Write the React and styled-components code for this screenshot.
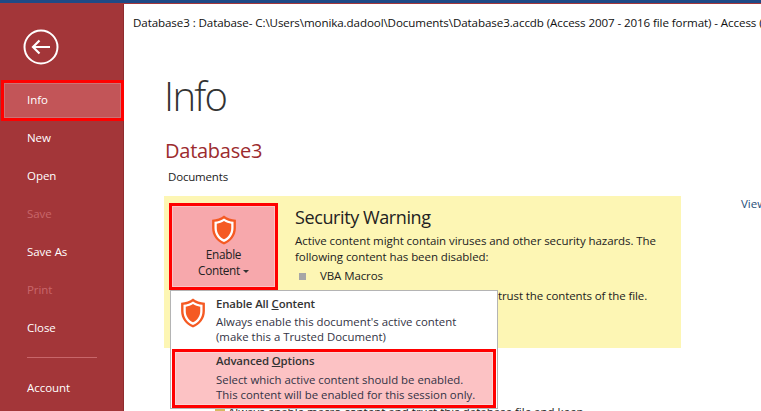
import React from "react";
import styled, { createGlobalStyle } from "styled-components";

const Global = createGlobalStyle`
  html, body { margin: 0; padding: 0; background: #fff; overflow: hidden; }
  body { font-family: "Open Sans", "Noto Sans", "Liberation Sans", sans-serif; }
  #root { width: 761px; height: 411px; overflow: hidden; }
`;
const Page = styled.div`width: 761px; height: 411px; display: flex; flex-direction: column; overflow: hidden;`;
const TopBar = styled.div`height: 3px; flex: none; background: #1f4a86; border-bottom: 1px solid #a4373a;`;
const Body = styled.div`flex: 1; display: flex; min-height: 0;`;
const Sidebar = styled.nav`
  width: 124px; flex: none; background: #a33639; border-right: 1px solid #8f2b2e; box-sizing: border-box;
  display: flex; flex-direction: column; color: #fff;
`;
const BackWrap = styled.div`height: 76px; flex: none; padding: 25px 0 0 23px; box-sizing: border-box; svg { display: block; }`;
const NavItem = styled.div`
  height: 38px; flex: none; box-sizing: border-box; display: flex; align-items: center; padding-left: 27px;
  font-size: 11.5px; letter-spacing: -0.05px;
  color: ${p => (p.$off ? "#c8666a" : "#fff")};
`;
const ActiveItem = styled(NavItem)`
  height: 41px; margin: 0 0 -3px 1px; width: 123px; padding: 0 0 3px 23px;
  border: 3px solid #f00; background: #c25558; box-shadow: inset 0 0 0 1px #cd7174;
`;
const Divider = styled.div`height: 1px; flex: none; margin: 11px 26px 10px 27px; background: #c8666a;`;
const Main = styled.main`flex: 1; position: relative; min-width: 0; overflow: hidden; padding: 11px 0 0 9px;`;
const FileTitle = styled.div`font-size: 11.6px; line-height: 16px; color: #111; white-space: nowrap; letter-spacing: -0.1px;`;
const Heading = styled.h1`margin: 38px 0 0 31px; font-size: 40px; line-height: 54px; font-weight: 300; color: #333; letter-spacing: -1.7px;`;
const DbName = styled.h2`margin: 14px 0 0 32px; font-size: 20px; line-height: 28px; font-weight: 400; color: #9c2b2e; letter-spacing: -0.25px;`;
const Docs = styled.div`margin: 4px 0 0 35px; font-size: 11.5px; line-height: 16px; color: #222; letter-spacing: -0.18px;`;
const Row = styled.div`display: flex; align-items: flex-start; margin: 11px 0 0 31px;`;
const Band = styled.section`
  width: 517px; height: 152px; flex: none; background: #fdf6b4; box-sizing: border-box;
  display: flex; padding: 7px 0 0 5px;
`;
const EnableBtn = styled.div`
  width: 109px; height: 87px; flex: none; box-sizing: border-box; border: 3px solid #f00;
  background: #f7a8ac; box-shadow: inset 0 0 0 1px #f9c4c6;
  display: flex; flex-direction: column; align-items: center; padding-top: 9px;
  font-size: 11.8px; line-height: 16px; color: #222; letter-spacing: -0.3px;
  svg { display: block; margin-bottom: 1px; }
`;
const Caret = styled.span`
  display: inline-block; width: 0; height: 0; margin-left: 3px; vertical-align: 2px;
  border-left: 3px solid transparent; border-right: 3px solid transparent; border-top: 3px solid #333;
`;
const Warn = styled.div`margin-left: 17px; color: #222; width: 380px; flex: none;`;
const WarnTitle = styled.h3`margin: 2px 0 0; font-size: 18px; line-height: 24px; font-weight: 400; letter-spacing: -0.4px; color: #222;`;
const WarnText = styled.p`margin: 4px 0 0; font-size: 11.5px; line-height: 16px; letter-spacing: -0.07px;`;
const Bullet = styled.div`display: flex; align-items: center; margin: 3px 0 0 4px; font-size: 11.5px; line-height: 16px; letter-spacing: -0.1px;`;
const Square = styled.span`width: 7px; height: 7px; background: #a6a6a6; margin-right: 14px;`;
const TrustLine = styled.div`margin: 4px 0 0; padding-left: 203px; font-size: 11.5px; line-height: 16px; letter-spacing: -0.1px; white-space: nowrap;`;
const ViewLink = styled.div`margin: 0 0 0 60px; font-size: 11.5px; line-height: 16px; color: #1f4e79; white-space: nowrap;`;
const Peek = styled.div`position: absolute; left: 91px; top: 401px; display: flex; align-items: flex-start; font-size: 11.5px; line-height: 14px; color: #222; white-space: nowrap;`;
const PeekIcon = styled.span`width: 10px; height: 12px; margin: 3px 3px 0 0; background: #d8b860;`;
const Menu = styled.div`
  position: absolute; left: 46px; top: 286px; width: 328px; height: 119px; box-sizing: border-box;
  background: #fff; border: 1px solid #b4b4b4; padding: 3px 1px 0 1px;
  display: flex; flex-direction: column; color: #333344;
`;
const MenuItem = styled.div`
  height: 55px; flex: none; box-sizing: border-box; display: flex;
  ${p => p.$hl ? "border: 3px solid #f00; background: #fcc2c4; box-shadow: inset 0 0 0 1px #fbd4d5; height: 59px; padding: 1px 0 0 41px;" : "padding-left: 8px;"}
`;
const IconSlot = styled.div`width: 36px; flex: none; padding-top: 4px; svg { display: block; }`;
const MenuText = styled.div`font-size: 11.4px; line-height: 15px; letter-spacing: 0; white-space: nowrap; padding-top: ${p => p.$hl ? "0" : "2px"};`;
const MenuTitle = styled.div`font-weight: 600; line-height: 16px; margin-bottom: ${p => p.$hl ? "3px" : "2px"}; color: #333; letter-spacing: -0.12px;`;
const Key = styled.span`text-decoration: underline;`;

const Shield = () => (
  <svg width="26" height="30" viewBox="1 0.5 24 29">
    <path d="M13 1 C10 3.6 6 4.8 1.5 5 V13 C1.5 20.5 6 26 13 29 C20 26 24.5 20.5 24.5 13 V5 C20 4.8 16 3.6 13 1 Z" fill="#f55a23" />
    <path d="M13 3.8 C10.5 5.8 7.4 6.8 3.8 7.1 V13 C3.8 19.3 7.4 24 13 26.6 C18.6 24 22.2 19.3 22.2 13 V7.1 C18.6 6.8 15.5 5.8 13 3.8 Z" fill="#fff" />
    <path d="M13 6.4 C11 7.8 8.5 8.7 6 9 V13 C6 18 8.8 22 13 24 C17.2 22 20 18 20 13 V9 C17.5 8.7 15 7.8 13 6.4 Z" fill="#f55a23" />
  </svg>
);

export default function App() {
  return (
    <Page>
      <Global />
      <TopBar />
      <Body>
        <Sidebar>
          <BackWrap>
            <svg width="36" height="36" viewBox="0 0 36 36" fill="none" stroke="#fff">
              <circle cx="18" cy="18" r="16.5" strokeWidth="2" />
              <path d="M10 18 H27 M16.5 11.5 L10 18 L16.5 24.5" strokeWidth="2.2" />
            </svg>
          </BackWrap>
          <ActiveItem>Info</ActiveItem>
          <NavItem>New</NavItem>
          <NavItem>Open</NavItem>
          <NavItem $off>Save</NavItem>
          <NavItem>Save As</NavItem>
          <NavItem $off>Print</NavItem>
          <NavItem>Close</NavItem>
          <Divider />
          <NavItem>Account</NavItem>
        </Sidebar>
        <Main>
          <FileTitle>Database3 : Database- C:\Users\monika.dadool\Documents\Database3.accdb (Access 2007 - 2016 file format) - Access (</FileTitle>
          <Heading>Info</Heading>
          <DbName>Database3</DbName>
          <Docs>Documents</Docs>
          <Row>
            <Band>
              <EnableBtn>
                <Shield />
                <div>Enable</div>
                <div>Content<Caret /></div>
              </EnableBtn>
              <Warn>
                <WarnTitle>Security Warning</WarnTitle>
                <WarnText>Active content might contain viruses and other security hazards. The following content has been disabled:</WarnText>
                <Bullet><Square />VBA Macros</Bullet>
                <TrustLine>trust the contents of the file.</TrustLine>
              </Warn>
            </Band>
            <ViewLink>View</ViewLink>
          </Row>
          <Peek><PeekIcon />Always enable macro content and trust this database file and keep</Peek>
          <Menu>
            <MenuItem>
              <IconSlot><Shield /></IconSlot>
              <MenuText>
                <MenuTitle>Enable All <Key>C</Key>ontent</MenuTitle>
                <div>Always enable this document's active content</div>
                <div>(make this a Trusted Document)</div>
              </MenuText>
            </MenuItem>
            <MenuItem $hl>
              <MenuText $hl>
                <MenuTitle $hl>Advanced <Key>O</Key>ptions</MenuTitle>
                <div>Select which active content should be enabled.</div>
                <div>This content will be enabled for this session only.</div>
              </MenuText>
            </MenuItem>
          </Menu>
        </Main>
      </Body>
    </Page>
  );
}
